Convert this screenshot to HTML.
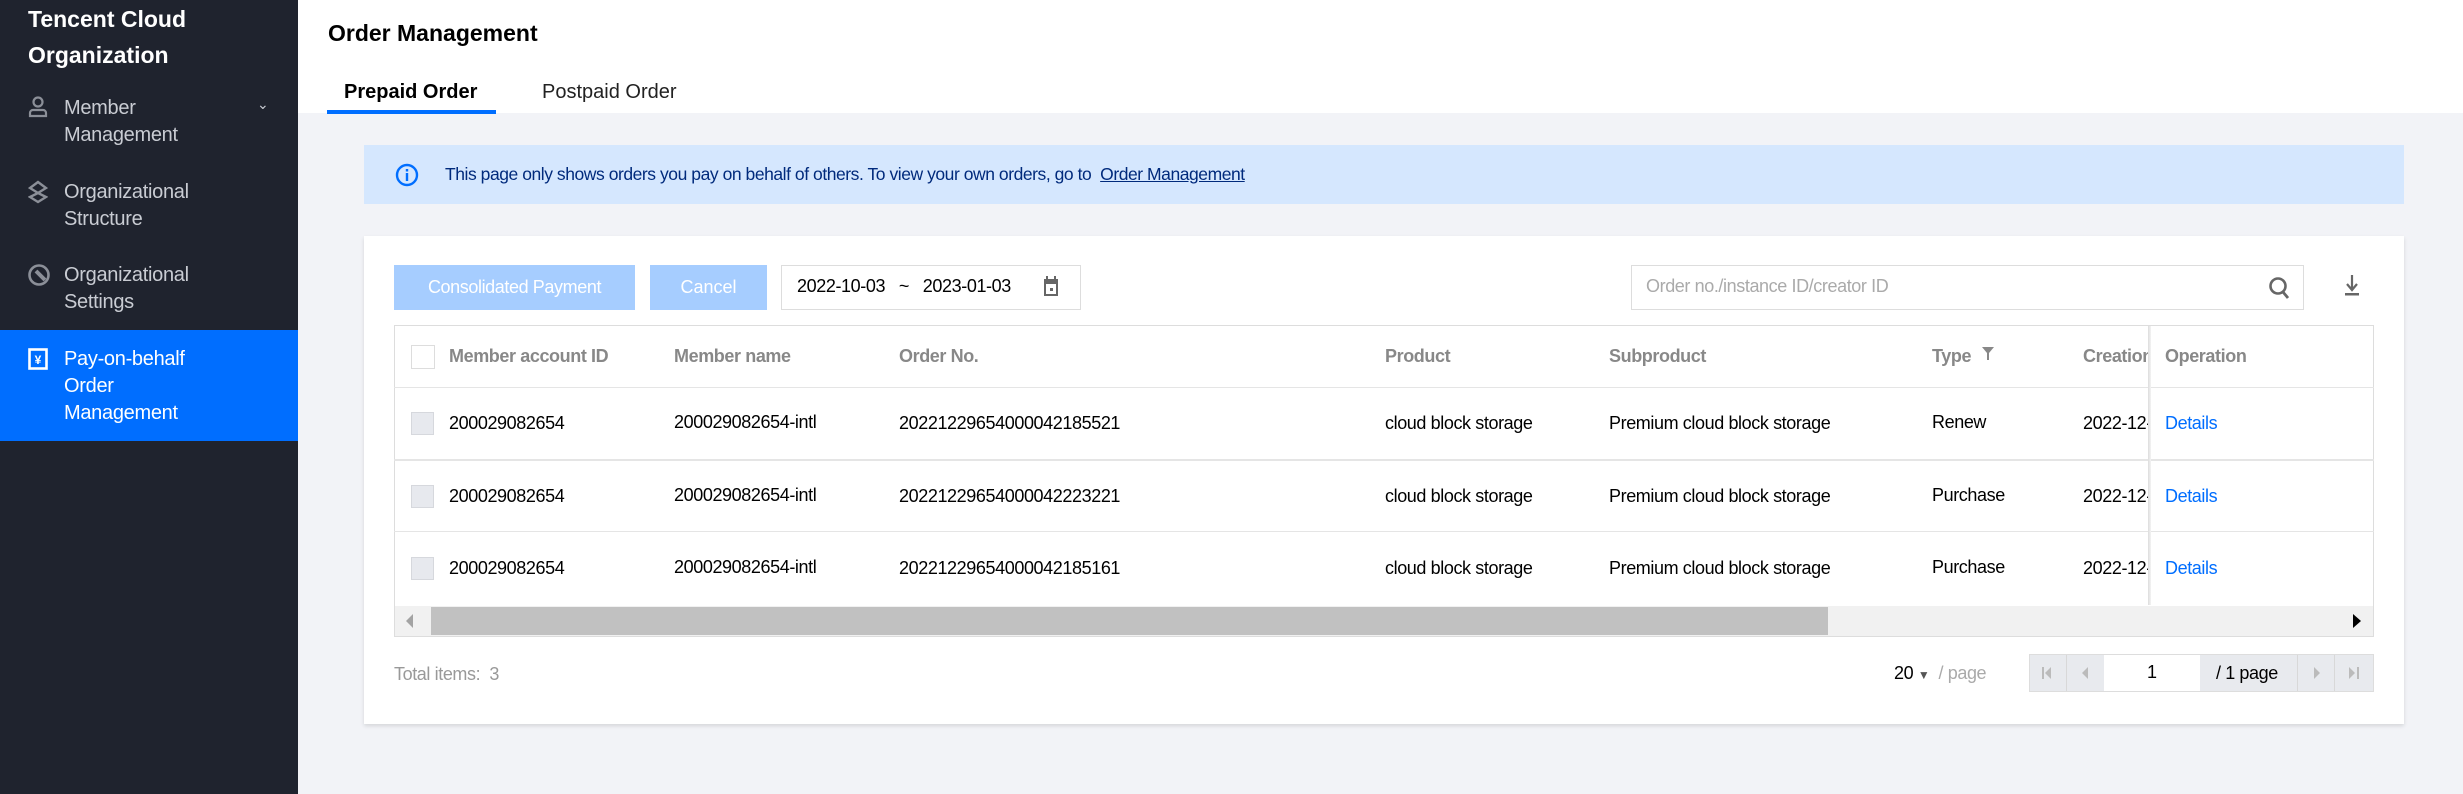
<!DOCTYPE html>
<html><head><meta charset="utf-8"><style>
*{margin:0;padding:0;box-sizing:border-box}
body{width:2463px;height:794px;position:relative;background:#f2f3f7;font-family:"Liberation Sans",sans-serif;overflow:hidden;color:#000}
.a{position:absolute;white-space:nowrap}
.side{left:0;top:0;width:298px;height:794px;background:#1f232e}
.st{color:#fff;font-weight:bold;font-size:23px;left:28px}
.mi{color:#c9ccd3;font-size:20px;left:64px;line-height:27px;letter-spacing:-0.3px}
.t{font-size:18px;letter-spacing:-0.4px}
.h{color:#888;font-weight:bold;font-size:18px;letter-spacing:-0.4px}
.row{left:394px;width:1980px;height:1px;background:#e5e5e5}
.cb{width:23px;height:23px;background:#e7e9ee;border:1px solid #d6d8dd}
</style></head><body>
<div class="a side"></div>
<div class="a st" style="top:6px">Tencent Cloud</div>
<div class="a st" style="top:42px">Organization</div>
<svg class="a" style="left:28px;top:96px" width="20" height="22" viewBox="0 0 20 22"><circle cx="10" cy="6" r="4.5" fill="none" stroke="#8b8f98" stroke-width="2.2"/><path d="M2 20v-3a3 3 0 0 1 3-3h10a3 3 0 0 1 3 3v3z" fill="none" stroke="#8b8f98" stroke-width="2.2"/></svg>
<div class="a mi" style="top:95px">Member<br>Management</div>
<div class="a" style="left:257px;top:96px;color:#c9ccd3;font-size:14px">&#8964;</div>
<svg class="a" style="left:28px;top:180px" width="20" height="24" viewBox="0 0 20 24"><path d="M10 2L2 8l8 5 -8 4 8 5 8-5-8-4 8-5z" fill="none" stroke="#8b8f98" stroke-width="2.4"/></svg>
<div class="a mi" style="top:179px">Organizational<br>Structure</div>
<svg class="a" style="left:27px;top:263px" width="24" height="24" viewBox="0 0 24 24"><circle cx="12" cy="12" r="9.5" fill="none" stroke="#8b8f98" stroke-width="2.6"/><path d="M9 8l9 9" stroke="#8b8f98" stroke-width="4"/></svg>
<div class="a mi" style="top:262px">Organizational<br>Settings</div>
<div class="a" style="left:0;top:330px;width:298px;height:111px;background:#006eff"></div>
<svg class="a" style="left:28px;top:348px" width="20" height="22" viewBox="0 0 20 22"><rect x="1.5" y="1.5" width="17" height="19" fill="none" stroke="#fff" stroke-width="2.6"/><text x="10" y="16" font-size="12" font-weight="bold" fill="#fff" text-anchor="middle" font-family="Liberation Sans">¥</text></svg>
<div class="a mi" style="top:346px;color:#fff">Pay-on-behalf<br>Order<br>Management</div>

<div class="a" style="left:298px;top:0;width:2165px;height:113px;background:#fff"></div>
<div class="a" style="left:328px;top:20px;font-size:23px;font-weight:bold;color:#000">Order Management</div>
<div class="a" style="left:344px;top:81px;font-size:20px;font-weight:bold">Prepaid Order</div>
<div class="a" style="left:542px;top:81px;font-size:20px;color:#222">Postpaid Order</div>
<div class="a" style="left:327px;top:110px;width:169px;height:4px;background:#006eff"></div>

<div class="a" style="left:364px;top:145px;width:2040px;height:59px;background:#d5e7fe"></div>
<svg class="a" style="left:395px;top:163px" width="24" height="24" viewBox="0 0 24 24"><circle cx="12" cy="12" r="10" fill="none" stroke="#006eff" stroke-width="2.4"/><rect x="10.8" y="10" width="2.4" height="8" fill="#006eff"/><rect x="10.8" y="6" width="2.4" height="2.5" fill="#006eff"/></svg>
<div class="a" style="left:445px;top:164px;font-size:17.5px;color:#002a7c;letter-spacing:-0.45px">This page only shows orders you pay on behalf of others. To view your own orders, go to &nbsp;<span style="text-decoration:underline">Order Management</span></div>

<div class="a" style="left:364px;top:236px;width:2040px;height:488px;background:#fff;box-shadow:0 2px 4px rgba(0,0,0,.12)"></div>
<div class="a" style="left:394px;top:265px;width:241px;height:45px;background:#a6cdff;color:#fff;font-size:18px;text-align:center;line-height:45px;letter-spacing:-0.4px">Consolidated Payment</div>
<div class="a" style="left:650px;top:265px;width:117px;height:45px;background:#a6cdff;color:#fff;font-size:18px;text-align:center;line-height:45px">Cancel</div>
<div class="a" style="left:781px;top:265px;width:300px;height:45px;border:1px solid #ddd"></div>
<div class="a t" style="left:797px;top:276px">2022-10-03 &nbsp; ~ &nbsp; 2023-01-03</div>
<svg class="a" style="left:1043px;top:276px" width="16" height="22" viewBox="0 0 16 22"><rect x="1" y="3" width="14" height="17" fill="#666"/><rect x="3" y="0" width="2" height="4" fill="#666"/><rect x="11" y="0" width="2" height="4" fill="#666"/><rect x="3" y="8" width="10" height="10" fill="#fff"/><rect x="7" y="12" width="3" height="3" fill="#666"/></svg>
<div class="a" style="left:1631px;top:265px;width:673px;height:45px;border:1px solid #ddd"></div>
<div class="a t" style="left:1646px;top:276px;color:#aaa">Order no./instance ID/creator ID</div>
<svg class="a" style="left:2268px;top:276px" width="22" height="24" viewBox="0 0 22 24"><circle cx="10" cy="10" r="7.5" fill="none" stroke="#666" stroke-width="2.6"/><path d="M15 16l5 6" stroke="#666" stroke-width="2.8"/></svg>
<svg class="a" style="left:2344px;top:275px" width="16" height="22" viewBox="0 0 16 22"><path d="M8 0v14M3 9l5 6 5-6" fill="none" stroke="#666" stroke-width="2.2"/><rect x="1" y="18" width="14" height="2.5" fill="#666"/></svg>

<div class="a" style="left:394px;top:325px;width:1980px;height:312px;border:1px solid #ddd"></div>
<div class="a row" style="top:387px"></div>
<div class="a row" style="top:459px;height:2px"></div>
<div class="a row" style="top:531px"></div>
<div class="a" style="left:2148px;top:326px;width:3px;height:279px;background:linear-gradient(to right,#ddd,#f3f3f3)"></div>
<div class="a" style="left:411px;top:345px;width:24px;height:24px;border:1px solid #ddd;background:#fff"></div>
<div class="a h" style="left:449px;top:346px">Member account ID</div>
<div class="a h" style="left:674px;top:346px">Member name</div>
<div class="a h" style="left:899px;top:346px">Order No.</div>
<div class="a h" style="left:1385px;top:346px">Product</div>
<div class="a h" style="left:1609px;top:346px">Subproduct</div>
<div class="a h" style="left:1932px;top:346px">Type</div>
<svg class="a" style="left:1982px;top:347px" width="12" height="14" viewBox="0 0 12 14"><path d="M0 0h12L7 6v7H5V6z" fill="#888"/></svg>
<div class="a h" style="left:2083px;top:346px;width:65px;overflow:hidden">Creation</div>
<div class="a h" style="left:2165px;top:346px">Operation</div>

<div class="a cb" style="left:411px;top:412px"></div>
<div class="a t" style="left:449px;top:413px">200029082654</div>
<div class="a t" style="left:674px;top:412px">200029082654-intl</div>
<div class="a t" style="left:899px;top:413px">20221229654000042185521</div>
<div class="a t" style="left:1385px;top:413px">cloud block storage</div>
<div class="a t" style="left:1609px;top:413px">Premium cloud block storage</div>
<div class="a t" style="left:1932px;top:412px">Renew</div>
<div class="a t" style="left:2083px;top:413px;width:65px;overflow:hidden">2022-12-</div>
<div class="a t" style="left:2165px;top:413px;color:#006eff">Details</div>

<div class="a cb" style="left:411px;top:485px"></div>
<div class="a t" style="left:449px;top:486px">200029082654</div>
<div class="a t" style="left:674px;top:485px">200029082654-intl</div>
<div class="a t" style="left:899px;top:486px">20221229654000042223221</div>
<div class="a t" style="left:1385px;top:486px">cloud block storage</div>
<div class="a t" style="left:1609px;top:486px">Premium cloud block storage</div>
<div class="a t" style="left:1932px;top:485px">Purchase</div>
<div class="a t" style="left:2083px;top:486px;width:65px;overflow:hidden">2022-12-</div>
<div class="a t" style="left:2165px;top:486px;color:#006eff">Details</div>

<div class="a cb" style="left:411px;top:557px"></div>
<div class="a t" style="left:449px;top:558px">200029082654</div>
<div class="a t" style="left:674px;top:557px">200029082654-intl</div>
<div class="a t" style="left:899px;top:558px">20221229654000042185161</div>
<div class="a t" style="left:1385px;top:558px">cloud block storage</div>
<div class="a t" style="left:1609px;top:558px">Premium cloud block storage</div>
<div class="a t" style="left:1932px;top:557px">Purchase</div>
<div class="a t" style="left:2083px;top:558px;width:65px;overflow:hidden">2022-12-</div>
<div class="a t" style="left:2165px;top:558px;color:#006eff">Details</div>

<div class="a" style="left:395px;top:606px;width:1978px;height:30px;background:#f1f1f1"></div>
<div class="a" style="left:431px;top:607px;width:1397px;height:28px;background:#c1c1c1"></div>
<svg class="a" style="left:406px;top:614px" width="8" height="14"><path d="M7 0v14L0 7z" fill="#a3a3a3"/></svg>
<svg class="a" style="left:2353px;top:614px" width="8" height="14"><path d="M0 0v14L8 7z" fill="#000"/></svg>

<div class="a t" style="left:394px;top:664px;color:#999">Total items: &nbsp;3</div>
<div class="a t" style="left:1894px;top:663px">20 <span style="font-size:12px;color:#555">&#9660;</span> &nbsp;<span style="color:#aaa">/ page</span></div>
<div class="a" style="left:2029px;top:654px;width:345px;height:38px;border:1px solid #ddd;background:#e8eaee"></div>
<div class="a" style="left:2066px;top:655px;width:1px;height:36px;background:#d8d8d8"></div>
<div class="a" style="left:2104px;top:655px;width:96px;height:36px;background:#fff"></div>
<div class="a" style="left:2297px;top:655px;width:1px;height:36px;background:#d8d8d8"></div>
<div class="a" style="left:2334px;top:655px;width:1px;height:36px;background:#d8d8d8"></div>
<svg class="a" style="left:2042px;top:666px" width="12" height="14"><rect x="0" y="1" width="2" height="12" fill="#bbb"/><path d="M9 1v12L3 7z" fill="#bbb"/></svg>
<svg class="a" style="left:2081px;top:666px" width="8" height="14"><path d="M7 1v12L1 7z" fill="#bbb"/></svg>
<div class="a t" style="left:2147px;top:662px">1</div>
<div class="a t" style="left:2216px;top:663px">/ 1 page</div>
<svg class="a" style="left:2313px;top:666px" width="8" height="14"><path d="M1 1v12L7 7z" fill="#bbb"/></svg>
<svg class="a" style="left:2348px;top:666px" width="12" height="14"><path d="M1 1v12L7 7z" fill="#bbb"/><rect x="9" y="1" width="2" height="12" fill="#bbb"/></svg>
</body></html>
